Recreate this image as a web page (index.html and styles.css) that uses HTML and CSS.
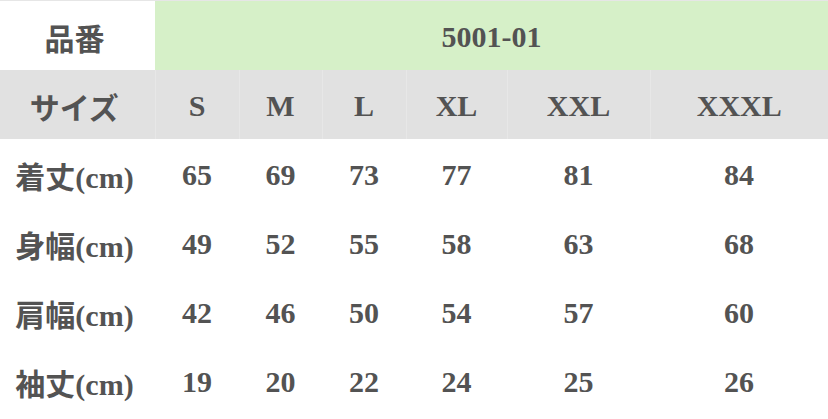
FILE: index.html
```html
<!DOCTYPE html>
<html lang="ja">
<head>
<meta charset="utf-8">
<title>サイズ表</title>
<link rel="stylesheet" href="styles.css">
</head>
<body>
<table class="size-table">
  <colgroup>
    <col class="c-label">
    <col class="c-s">
    <col class="c-m">
    <col class="c-l">
    <col class="c-xl">
    <col class="c-xxl">
    <col class="c-xxxl">
  </colgroup>
  <tr class="row-code">
    <th class="label">品番</th>
    <td class="code" colspan="6">5001-01</td>
  </tr>
  <tr class="row-size">
    <th class="label">サイズ</th>
    <td>S</td><td>M</td><td>L</td><td>XL</td><td>XXL</td><td>XXXL</td>
  </tr>
  <tr class="row-data">
    <th class="label">着丈(cm)</th>
    <td>65</td><td>69</td><td>73</td><td>77</td><td>81</td><td>84</td>
  </tr>
  <tr class="row-data">
    <th class="label">身幅(cm)</th>
    <td>49</td><td>52</td><td>55</td><td>58</td><td>63</td><td>68</td>
  </tr>
  <tr class="row-data">
    <th class="label">肩幅(cm)</th>
    <td>42</td><td>46</td><td>50</td><td>54</td><td>57</td><td>60</td>
  </tr>
  <tr class="row-data">
    <th class="label">袖丈(cm)</th>
    <td>19</td><td>20</td><td>22</td><td>24</td><td>25</td><td>26</td>
  </tr>
</table>
</body>
</html>
```
FILE: styles.css
```css
html, body {
  margin: 0;
  padding: 0;
  background: #ffffff;
}

.size-table {
  width: 828px;
  border-collapse: collapse;
  table-layout: fixed;
  font-family: "Liberation Serif", "Noto Sans CJK JP", serif;
  font-weight: bold;
  font-size: 30px;
  color: #535353;
  border-top: 1px solid #e6e6e6;
}

.c-label { width: 155px; }
.c-s { width: 84px; }
.c-m { width: 83px; }
.c-l { width: 84px; }
.c-xl { width: 101px; }
.c-xxl { width: 143px; }
.c-xxxl { width: 178px; }

.size-table th,
.size-table td {
  padding: 3px 0 0 0;
  text-align: center;
  vertical-align: middle;
  font-weight: bold;
  white-space: nowrap;
}

.size-table .label {
  padding-right: 6px;
}

.row-code th,
.row-code td {
  height: 66px;
}

.row-code .code {
  background: #d6f0c8;
}

.row-size th,
.row-size td {
  height: 66px;
  background: #e1e1e1;
}

.row-size td {
  border-left: 1px solid #e7e7e7;
}

.row-data th,
.row-data td {
  height: 66px;
}
```
